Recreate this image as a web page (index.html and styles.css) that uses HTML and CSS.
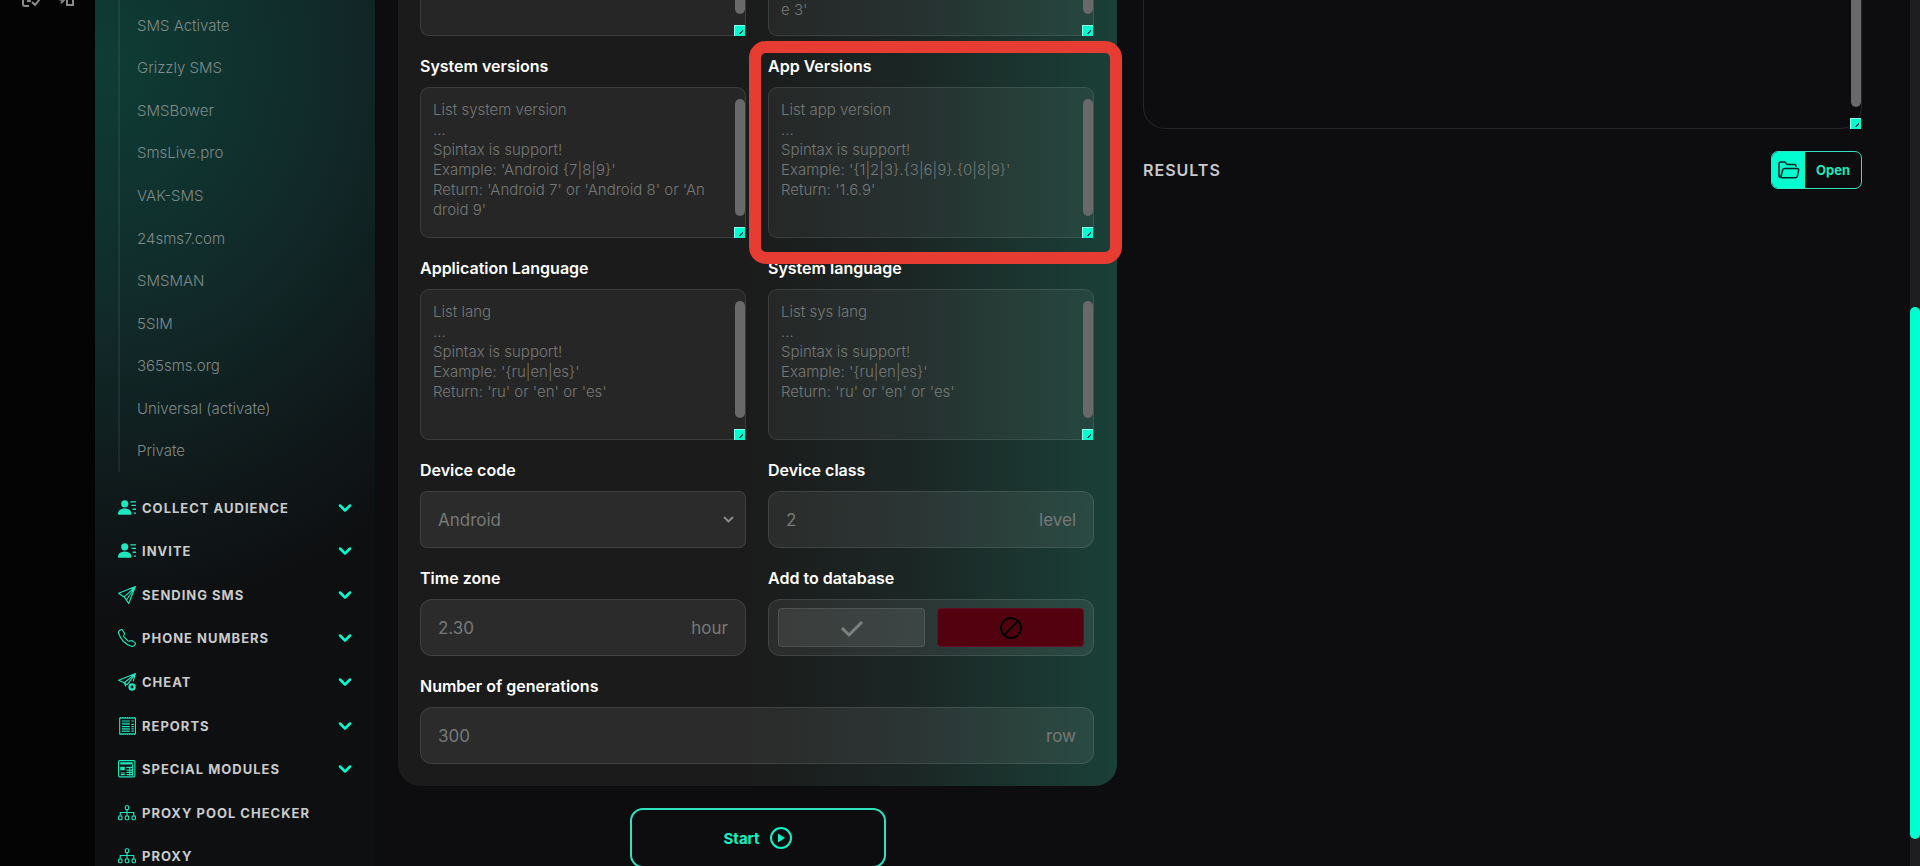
FILE: index.html
```html
<!doctype html>
<html lang="en">
  <head>
    <meta charset="utf-8">
    <title>Generator</title>
    <meta name="viewport" content="width=device-width, initial-scale=1">
    <link rel="stylesheet" href="styles.css">
  </head>
  <body>
    <svg class="sprite" aria-hidden="true">
      <symbol id="i-person" viewBox="0 0 16 16">
        <path fill="currentColor" d="M6 7.500a3.200 3.200 0 1 0 0-6.400 3.200 3.200 0 0 0 0 6.400ZM1 14s-1 0-1-1 1-4.500 6-4.500 6 3.500 6 4.500-1 1-1 1H1ZM11 2h5v1.200h-5zM12 5h4v1.200h-4zM13 8.500h3v1.200h-3zM14 12h2v1.200h-2z"/>
      </symbol>
      <symbol id="i-send" viewBox="0 0 16 16">
        <path fill="none" stroke="currentColor" stroke-linejoin="round" d="M15.500.5.500 6.500l5 3.200 4 5.800zM15.500.5l-10 9.200M15.500.5 7.500 12.500"/>
      </symbol>
      <symbol id="i-phone" viewBox="0 0 16 16">
        <path fill="none" stroke="currentColor" stroke-linejoin="round" d="M1.500 1.200 2.600.6a1 1 0 0 1 1.300.3l1.700 2.500a1 1 0 0 1 .1.900l-.6 1.700a1 1 0 0 0 .2 1l3.500 3.600a1 1 0 0 0 1 .2l1.800-.5a1 1 0 0 1 .9.100l2.600 1.700a1 1 0 0 1 .2 1.500l-1 1.100a2.500 2.500 0 0 1-2.500.6A18 18 0 0 1 .7 4.200 2.500 2.500 0 0 1 1.500 1.200Z"/>
      </symbol>
      <symbol id="i-cheat" viewBox="0 0 16 16">
        <path fill="none" stroke="currentColor" stroke-linejoin="round" d="m8 10.500-2.500-1.800L.5 6.500 15.500.500l-2 7M15.500.5l-10 8.200M15.500.5 8 10.500M5.500 8.700 7 12"/>
        <circle cx="12.500" cy="12.500" r="2.300" fill="none" stroke="currentColor" stroke-width="2"/>
      </symbol>
      <symbol id="i-report" viewBox="0 0 16 16">
        <rect x="1.500" y="1" width="14" height="14" fill="none" stroke="currentColor"/>
        <path fill="none" stroke="currentColor" d="M3.500 8.500h7M3.500 10.500h7M3.500 12.500h7M3.500 3.500h7M12 3.500h2M12 6.500h2M12 8.500h2M12 10.500h2M12 12.500h2"/>
        <path fill="none" stroke="currentColor" stroke-dasharray="1 1" d="M2 .3h13M2 15.700h13"/>
        <path fill="currentColor" opacity=".7" d="M3.500 5h7v2h-7z"/>
      </symbol>
      <symbol id="i-modules" viewBox="0 0 16 16">
        <rect x=".5" y=".5" width="14.500" height="14.500" rx="1" fill="none" stroke="currentColor"/>
        <path fill="currentColor" d="M2 2h11v2H2zM2 6h4v3H2z"/>
        <path fill="none" stroke="currentColor" d="M2.500 11.500H6M2.500 13H6M7.500 6.500h6M7.500 9h6M7.500 11h6M7.500 13h6M10.500 6v8M13 4v10"/>
      </symbol>
      <symbol id="i-proxy" viewBox="0 0 16 16">
        <path fill="none" stroke="currentColor" d="M2 10V7.500h12V10M8 5v5"/>
        <g fill="none" stroke="currentColor">
          <rect x="6.500" y="1.500" width="3" height="3.500" rx="1"/>
          <rect x=".5" y="10.500" width="3" height="3.500" rx="1"/>
          <rect x="6.500" y="10.500" width="3" height="3.500" rx="1"/>
          <rect x="12.500" y="10.500" width="3" height="3.500" rx="1"/>
        </g>
      </symbol>
      <symbol id="i-chevron" viewBox="0 0 14 14">
        <path fill="none" stroke="currentColor" stroke-width="2.500" stroke-linecap="round" stroke-linejoin="round" d="m2 4.500 5 5 5-5"/>
      </symbol>
      <symbol id="i-folder" viewBox="0 0 22 18">
        <path fill="none" stroke="currentColor" stroke-width="1.600" stroke-linecap="round" stroke-linejoin="round" d="M2 16.500c-.7-.4-1-1-1-2V3c0-1.200.7-2 1.800-2h4l2.500 2.500h7c1 0 1.700.7 1.700 1.800M6.500 7.500h12.700c1.200 0 1.600.7 1.400 1.700l-1.200 6c-.2 1-.8 1.500-1.800 1.500H4c-.8 0-1.200-.6-1-1.400l1.700-6.400c.3-.9.900-1.400 1.800-1.400Z"/>
      </symbol>
    </svg>

    <div class="app">
      <nav class="rail" aria-label="Tools">
        <button type="button" aria-label="Tasks">
          <svg viewBox="0 0 18 18"><path d="M8 1H3Q1 1 1 3v12q0 2 2 2h4M5 12h4M10 13l3 3 5-6"/></svg>
        </button>
        <button type="button" aria-label="Convert">
          <svg viewBox="0 0 18 18"><path d="M1 7q0 4 7 4M5 8l3 3-3 3M11 9h6v7h-6z"/></svg>
        </button>
      </nav>

      <aside class="sidebar">
        <ul class="submenu">
          <li><a href="#">SMS Activate</a></li>
          <li><a href="#">Grizzly SMS</a></li>
          <li><a href="#">SMSBower</a></li>
          <li><a href="#">SmsLive.pro</a></li>
          <li><a href="#">VAK-SMS</a></li>
          <li><a href="#">24sms7.com</a></li>
          <li><a href="#">SMSMAN</a></li>
          <li><a href="#">5SIM</a></li>
          <li><a href="#">365sms.org</a></li>
          <li><a href="#">Universal (activate)</a></li>
          <li><a href="#">Private</a></li>
        </ul>
        <ul class="menu">
          <li><a href="#"><svg><use href="#i-person"/></svg><span>COLLECT AUDIENCE</span><svg class="chevron"><use href="#i-chevron"/></svg></a></li>
          <li><a href="#"><svg><use href="#i-person"/></svg><span>INVITE</span><svg class="chevron"><use href="#i-chevron"/></svg></a></li>
          <li><a href="#"><svg><use href="#i-send"/></svg><span>SENDING SMS</span><svg class="chevron"><use href="#i-chevron"/></svg></a></li>
          <li><a href="#"><svg><use href="#i-phone"/></svg><span>PHONE NUMBERS</span><svg class="chevron"><use href="#i-chevron"/></svg></a></li>
          <li><a href="#"><svg><use href="#i-cheat"/></svg><span>CHEAT</span><svg class="chevron"><use href="#i-chevron"/></svg></a></li>
          <li><a href="#"><svg><use href="#i-report"/></svg><span>REPORTS</span><svg class="chevron"><use href="#i-chevron"/></svg></a></li>
          <li><a href="#"><svg><use href="#i-modules"/></svg><span>SPECIAL MODULES</span><svg class="chevron"><use href="#i-chevron"/></svg></a></li>
          <li><a href="#"><svg><use href="#i-proxy"/></svg><span>PROXY POOL CHECKER</span></a></li>
          <li><a href="#"><svg><use href="#i-proxy"/></svg><span>PROXY</span></a></li>
        </ul>
      </aside>

      <main class="content">
        <section class="settings">
          <form class="panel" id="generator">
            <div class="area area-cut">
              <textarea aria-label="Brands"></textarea>
            </div>
            <div class="area area-cut">
              <textarea aria-label="Devices" placeholder="e 3'"></textarea>
            </div>

            <div class="field">
              <label for="sysver">System versions</label>
              <div class="area">
                <textarea id="sysver" placeholder="List system version&#10;...&#10;Spintax is support!&#10;Example: 'Android {7|8|9}'&#10;Return: 'Android 7' or 'Android 8' or 'Android 9'"></textarea>
              </div>
            </div>
            <div class="field marked">
              <label for="appver">App Versions</label>
              <div class="area">
                <textarea id="appver" placeholder="List app version&#10;...&#10;Spintax is support!&#10;Example: '{1|2|3}.{3|6|9}.{0|8|9}'&#10;Return: '1.6.9'"></textarea>
              </div>
            </div>

            <div class="field">
              <label for="applang">Application Language</label>
              <div class="area">
                <textarea id="applang" placeholder="List lang&#10;...&#10;Spintax is support!&#10;Example: '{ru|en|es}'&#10;Return: 'ru' or 'en' or 'es'"></textarea>
              </div>
            </div>
            <div class="field">
              <label for="syslang">System language</label>
              <div class="area">
                <textarea id="syslang" placeholder="List sys lang&#10;...&#10;Spintax is support!&#10;Example: '{ru|en|es}'&#10;Return: 'ru' or 'en' or 'es'"></textarea>
              </div>
            </div>

            <div class="field">
              <label for="code">Device code</label>
              <div class="box box-select">
                <select id="code">
                  <option>Android</option>
                  <option>iOS</option>
                </select>
                <svg class="arrow"><use href="#i-chevron"/></svg>
              </div>
            </div>
            <div class="field">
              <label for="class">Device class</label>
              <div class="box">
                <input type="text" id="class" value="2">
                <span>level</span>
              </div>
            </div>

            <div class="field">
              <label for="zone">Time zone</label>
              <div class="box">
                <input type="text" id="zone" value="2.30">
                <span>hour</span>
              </div>
            </div>
            <div class="field">
              <span class="title" id="add">Add to database</span>
              <div class="box toggle" role="group" aria-labelledby="add">
                <button type="button" class="yes" aria-label="Yes">
                  <svg viewBox="0 0 24 24"><path d="m2 12 7 7L22 6"/></svg>
                </button>
                <button type="button" class="no" aria-label="No">
                  <svg viewBox="0 0 24 24"><circle cx="12" cy="12" r="10"/><path d="M5 19 19 5"/></svg>
                </button>
              </div>
            </div>

            <div class="field wide">
              <label for="count">Number of generations</label>
              <div class="box">
                <input type="text" id="count" value="300">
                <span>row</span>
              </div>
            </div>
          </form>

          <button type="submit" form="generator" class="start">
            Start
            <svg viewBox="0 0 22 22"><circle cx="11" cy="11" r="10"/><path d="M8 6.500v9l7-4.500z"/></svg>
          </button>
        </section>

        <section class="output">
          <div class="area area-log">
            <textarea aria-label="Log"></textarea>
          </div>
          <div class="results">
            <h2>RESULTS</h2>
            <button type="button" class="open">
              <span class="folder"><svg><use href="#i-folder"/></svg></span>
              <span class="text">Open</span>
            </button>
          </div>
        </section>
      </main>

      <div class="scrollbar"><div class="thumb"></div></div>
    </div>
  </body>
</html>
```
FILE: styles.css
```css
:root {
    --accent: #00ffd0;
    --line: rgba(255, 255, 255, 0.1);
    --fill: rgba(255, 255, 255, 0.05);
    --muted: #767978;
}

* {
    box-sizing: border-box;
}

body {
    margin: 0;
    height: 100vh;
    overflow: hidden;
    background: #0d0d0f;
    color: #fff;
    font-family: Inter, "Liberation Sans", sans-serif;
    font-size: 16px;
}

button, input, select, textarea {
    font: inherit;
    color: inherit;
    margin: 0;
}

button {
    cursor: pointer;
}

ul {
    list-style: none;
    margin: 0;
    padding: 0;
}

a {
    color: inherit;
    text-decoration: none;
}

.sprite {
    display: none;
}

.app {
    display: flex;
    height: 100vh;
    overflow: hidden;
}

/* Left rail */
.rail {
    flex: 0 0 95px;
    display: flex;
    justify-content: center;
    align-items: flex-start;
    gap: 16px;
    background: #040404;
}
.rail button {
    margin-top: -11px;
    padding: 0;
    border: none;
    background: none;
    color: #8b8b8b;
}
.rail svg {
    display: block;
    width: 18px;
    height: 18px;
    fill: none;
    stroke: currentColor;
    stroke-width: 2;
}

/* Sidebar */
.sidebar {
    flex: 0 0 280px;
    padding: 0 23px;
    background: radial-gradient(ellipse 500px 560px at 0 60px, #0e3d35, #112b2a 45%, #101c1d 72%, #0e0f11);
}
.submenu {
    display: flex;
    flex-direction: column;
    height: 472px;
    padding: 4px 0 0 17px;
    border-left: 2px solid rgba(255, 255, 255, 0.06);
    color: #7f8a88;
    font-size: 15px;
    font-weight: 300;
}
.submenu li {
    flex: 1;
    display: flex;
    align-items: center;
}
.menu {
    display: flex;
    flex-direction: column;
    height: 392px;
    margin-top: 14px;
}
.menu li {
    flex: 1;
}
.menu a {
    display: flex;
    align-items: center;
    gap: 6px;
    height: 100%;
    color: #c9cbcb;
    font-size: 13px;
    font-weight: 700;
    letter-spacing: 1px;
}
.menu span {
    flex: 1;
    white-space: nowrap;
}
.menu svg {
    flex: none;
    width: 18px;
    height: 18px;
    color: #1fe6bd;
}
.menu .chevron {
    width: 14px;
    height: 14px;
    color: var(--accent);
}

/* Content */
.content {
    flex: 1;
    min-width: 0;
    display: grid;
    grid-template-columns: repeat(2, minmax(0, 1fr));
    gap: 26px;
    align-items: start;
    padding: 0 48px 0 23px;
    background: #0d0d0f;
}
.settings {
    display: flex;
    flex-direction: column;
    align-items: center;
    gap: 22px;
}
.panel {
    display: grid;
    grid-template-columns: repeat(2, minmax(0, 1fr));
    gap: 20px 22px;
    width: 100%;
    padding: 0 23px 22px 22px;
    border-radius: 0 0 22px 22px;
    background: linear-gradient(90deg, #1b1b1b 48%, #1b2725 72%, #1a4037);
}
.wide {
    grid-column: 1 / -1;
}
.field {
    position: relative;
}
.field label, .title {
    display: block;
    margin-bottom: 11px;
    line-height: 20px;
    font-weight: 600;
}

.area {
    position: relative;
    height: 151px;
}
.area textarea {
    display: block;
    width: 100%;
    height: 100%;
    padding: 12px 35px 12px 12px;
    border: 1px solid var(--line);
    border-radius: 9px;
    outline: none;
    background: var(--fill);
    font-size: 15px;
    line-height: 20px;
    font-weight: 300;
    word-break: break-all;
    resize: none;
    overflow: hidden;
}
.area textarea::placeholder {
    color: #757877;
    opacity: 1;
}
/* Scroll thumb */
.area::before {
    content: "";
    position: absolute;
    top: 12px;
    right: 1px;
    bottom: 22px;
    width: 10px;
    border-radius: 5px;
    background: #686968;
}
/* Resize corner */
.area::after {
    content: "";
    position: absolute;
    right: 1px;
    bottom: 0;
    width: 10px;
    height: 10px;
    border: 1px solid #8bffe9;
    border-width: 1px 0 0 1px;
    background: linear-gradient(135deg, transparent 40%, #045 40%, #045 65%, transparent 65%) 4px 4px / 4px 4px no-repeat var(--accent);
}
.area-cut {
    height: 36px;
}
.area-log {
    height: 129px;
}
.area-cut::before, .area-log::before {
    top: 0;
    border-radius: 0 0 5px 5px;
}
.area-cut textarea {
    padding-top: 0;
    padding-bottom: 0;
    border-top: none;
    border-radius: 0 0 9px 9px;
}
.area-log textarea {
    border-top: none;
    border-radius: 0 0 22px 22px;
    background: none;
}

.marked::after {
    content: "";
    position: absolute;
    z-index: 2;
    inset: -15px -28px -26px -19px;
    border: 12px solid #e63c31;
    border-radius: 17px;
    pointer-events: none;
}

.box {
    position: relative;
    display: flex;
    align-items: center;
    height: 57px;
    padding: 0 17px;
    border: 1px solid var(--line);
    border-radius: 12px;
    background: rgba(255, 255, 255, 0.07);
    color: var(--muted);
    font-size: 17px;
}
.box input {
    flex: 1;
    min-width: 0;
    padding: 0;
    border: none;
    outline: none;
    background: none;
}
.box-select {
    padding: 0;
    border-radius: 7px;
}
.box select {
    width: 100%;
    height: 100%;
    padding: 0 17px;
    border: none;
    outline: none;
    appearance: none;
    background: none;
}
.box .arrow {
    position: absolute;
    right: 11px;
    width: 11px;
    height: 11px;
    color: #8a8b8a;
    pointer-events: none;
}
.toggle {
    gap: 12px;
    padding: 8px 9px;
}
.toggle button {
    flex: 1;
    display: flex;
    align-items: center;
    justify-content: center;
    height: 100%;
    padding: 0;
    border-radius: 4px;
}
.toggle svg {
    width: 24px;
    height: 24px;
    fill: none;
    stroke: currentColor;
    stroke-width: 2;
}
.toggle .yes {
    border: 1px solid var(--line);
    background: rgba(255, 255, 255, 0.08);
    color: #7c817f;
}
.toggle .no {
    border: 1px solid #631024;
    background: #53000f;
    color: #000;
}
.toggle .yes svg {
    stroke-width: 3;
}

.start {
    display: flex;
    align-items: center;
    justify-content: center;
    gap: 10px;
    width: 256px;
    height: 60px;
    border: 2px solid #2fe3bf;
    border-radius: 13px;
    background: none;
    color: #10f2c8;
    font-size: 15px;
    font-weight: 700;
}
.start svg {
    width: 22px;
    height: 22px;
    fill: none;
    stroke: currentColor;
    stroke-width: 2;
}
.start path {
    fill: currentColor;
    stroke: none;
}

/* Results */
.results {
    display: flex;
    align-items: center;
    justify-content: space-between;
    margin-top: 22px;
}
.results h2 {
    margin: 0;
    color: #c9c9c9;
    font-size: 16px;
    font-weight: 600;
    letter-spacing: 1px;
}
.open {
    display: flex;
    align-items: stretch;
    height: 38px;
    padding: 0;
    overflow: hidden;
    border: 1px solid #2fe3bf;
    border-radius: 7px;
    background: none;
    color: #1fe6bd;
    font-size: 13px;
    font-weight: 700;
}
.open .folder {
    display: flex;
    align-items: center;
    width: 33px;
    padding-left: 6px;
    background: var(--accent);
    color: #072620;
}
.open svg {
    width: 22px;
    height: 18px;
}
.open .text {
    display: flex;
    align-items: center;
    padding: 0 11px;
}

/* Page scrollbar */
.scrollbar {
    flex: 0 0 10px;
    padding-top: 307px;
    background: #1e1e20;
}
.scrollbar .thumb {
    height: 532px;
    border-radius: 5px;
    background: var(--accent);
}
```
